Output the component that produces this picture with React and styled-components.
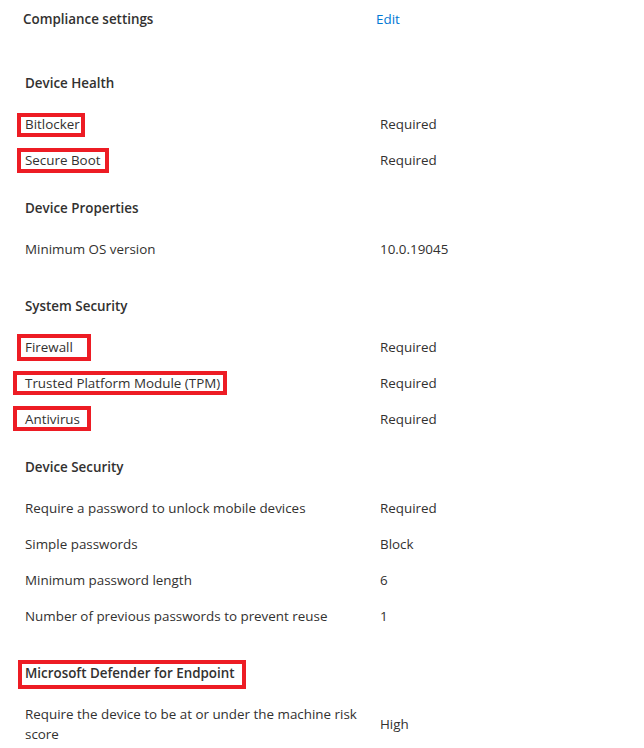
import React from "react";
import styled, { createGlobalStyle } from "styled-components";

const GlobalStyle = createGlobalStyle`
  body {
    margin: 0;
    background: #ffffff;
    font-family: "Open Sans", "Noto Sans", sans-serif;
    color: #323130;
  }
`;

// box = extra room round the text for the red marker: [top, right, bottom, left]
const sections = [
  {
    title: "Device Health",
    rows: [
      { label: "Bitlocker", value: "Required", box: [-12, 5, -14, 8] },
      { label: "Secure Boot", value: "Required", box: [-13, 8, -14, 8] },
    ],
  },
  {
    title: "Device Properties",
    rows: [{ label: "Minimum OS version", value: "10.0.19045" }],
  },
  {
    title: "System Security",
    gap: 21,
    rows: [
      { label: "Firewall", value: "Required", box: [-14, 18, -15, 8] },
      { label: "Trusted Platform Module (TPM)", value: "Required", box: [-13, 7, -13, 12] },
      { label: "Antivirus", value: "Required", box: [-14, 11, -13, 12] },
    ],
  },
  {
    title: "Device Security",
    rows: [
      { label: "Require a password to unlock mobile devices", value: "Required" },
      { label: "Simple passwords", value: "Block" },
      { label: "Minimum password length", value: "6" },
      { label: "Number of previous passwords to prevent reuse", value: "1" },
    ],
  },
  {
    title: "Microsoft Defender for Endpoint",
    gap: 21,
    box: [-14, 11, -17, 7],
    rows: [
      {
        label: "Require the device to be at or under the machine risk score",
        value: "High",
        tall: true,
      },
    ],
  },
];

export default function App() {
  return (
    <Page>
      <GlobalStyle />
      <TitleRow>
        <Title>Compliance settings</Title>
        <EditLink href="#">Edit</EditLink>
      </TitleRow>
      {sections.map((section) => (
        <Section key={section.title} $gap={section.gap}>
          <SectionHeader>
            {section.box ? (
              <Marked $box={section.box}>{section.title}</Marked>
            ) : (
              section.title
            )}
          </SectionHeader>
          {section.rows.map((row) => (
            <Row key={row.label} $tall={row.tall}>
              <Label>
                {row.box ? <Marked $box={row.box}>{row.label}</Marked> : row.label}
              </Label>
              <Value>{row.value}</Value>
            </Row>
          ))}
        </Section>
      ))}
    </Page>
  );
}

const Page = styled.div`
  width: 644px;
  height: 748px;
  overflow: hidden;
  padding-left: 25px;
  box-sizing: border-box;
  font-size: 13.4px;
`;

const TitleRow = styled.div`
  display: grid;
  grid-template-columns: 353px 1fr;
  align-items: center;
  height: 38px;
  margin-left: -2px;
  margin-bottom: 27px;
`;

const Title = styled.div`
  font-weight: 600;
`;

const EditLink = styled.a`
  color: #0078d4;
  text-decoration: none;
`;

const Section = styled.div`
  margin-top: ${({ $gap }) => ($gap ? $gap : 12)}px;
`;

const SectionHeader = styled.div`
  height: 36px;
  display: flex;
  align-items: center;
  font-weight: 600;
  margin-bottom: 5px;
`;

const Row = styled.div`
  display: grid;
  grid-template-columns: 355px 1fr;
  align-items: center;
  min-height: 36px;
  margin-top: ${({ $tall }) => ($tall ? "13px" : "0")};
  line-height: 20px;
`;

const Label = styled.div`
  max-width: 345px;
`;

const Value = styled.div``;

const Marked = styled.span`
  position: relative;
  &::after {
    content: "";
    position: absolute;
    top: ${({ $box }) => $box[0] + 10}px;
    bottom: ${({ $box }) => $box[2] + 10}px;
    left: -${({ $box }) => $box[3]}px;
    right: -${({ $box }) => $box[1]}px;
    border: 4px solid #ed1c24;
    pointer-events: none;
  }
`;
